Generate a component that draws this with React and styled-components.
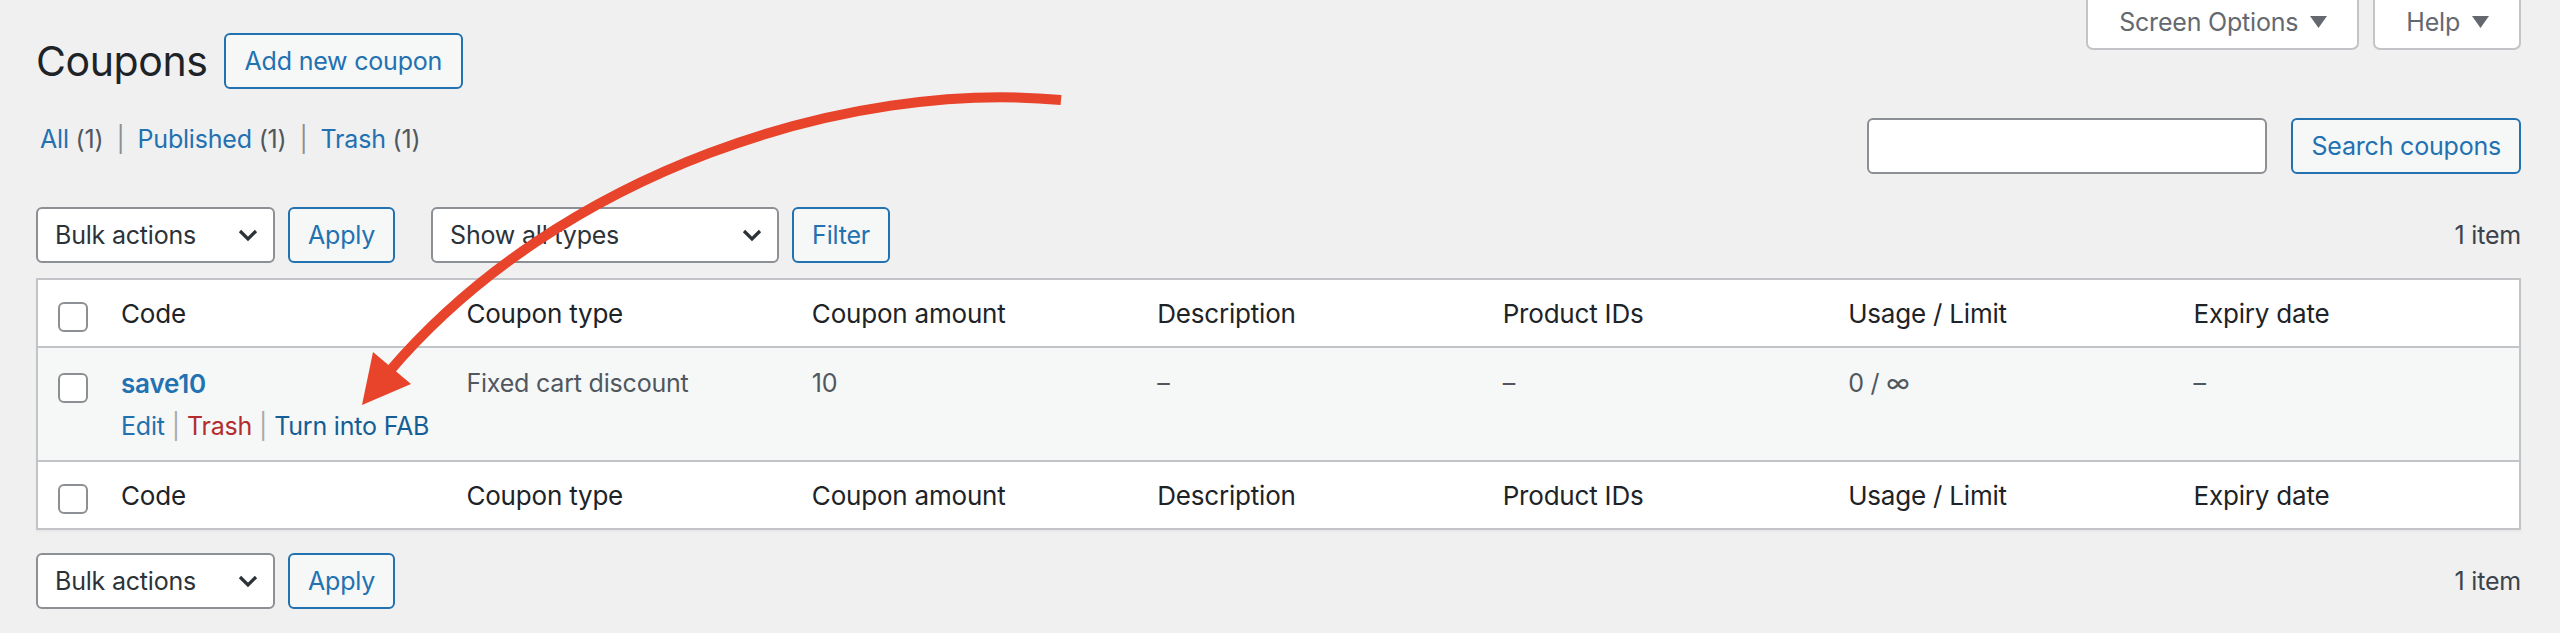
import React from "react";
import styled, { createGlobalStyle } from "styled-components";

const GlobalStyle = createGlobalStyle`
  html, body {
    margin: 0;
    padding: 0;
  }
  body {
    background: #f0f0f1;
    font-family: Inter, "Noto Sans", "Liberation Sans", sans-serif;
    color: #3c434a;
    letter-spacing: -0.2px;
  }
`;

const columns = [
  "Code",
  "Coupon type",
  "Coupon amount",
  "Description",
  "Product IDs",
  "Usage / Limit",
  "Expiry date",
];

const coupon = {
  code: "save10",
  type: "Fixed cart discount",
  amount: "10",
  description: "–",
  products: "–",
  usage: "0 / ∞",
  expiry: "–",
};

const Caret = () => (
  <svg width="17" height="12" viewBox="0 0 17 12">
    <path d="M0 0h17L8.5 12z" fill="#646970" />
  </svg>
);

const Chevron = () => (
  <svg width="20" height="13" viewBox="0 0 20 13">
    <path d="M2 2l8 8 8-8" stroke="#2c3338" strokeWidth="3.2" fill="none" />
  </svg>
);

const Select = ({ label, width, ml }) => (
  <SelectBox $width={width} $ml={ml}>
    <span>{label}</span>
    <Chevron />
  </SelectBox>
);

const TableNavBar = ({ top }) => (
  <TableNav $top={top}>
    <Select label="Bulk actions" width={239} />
    <Button $ml={13}>Apply</Button>
    {top && (
      <>
        <Select label="Show all types" width={348} ml={36} />
        <Button $ml={13}>Filter</Button>
      </>
    )}
    <Count>1 item</Count>
  </TableNav>
);

const HeadRow = ({ foot }) => (
  <HeaderRow $foot={foot}>
    <CheckCell $head>
      <Checkbox />
    </CheckCell>
    {columns.map((c) => (
      <HeadCell key={c}>{c}</HeadCell>
    ))}
  </HeaderRow>
);

const App = () => {
  return (
    <Page>
      <GlobalStyle />
      <TopBar>
        <TitleGroup>
          <Title>Coupons</Title>
          <Button $action>Add new coupon</Button>
        </TitleGroup>
        <MetaLinks>
          <MetaTab>
            Screen Options <Caret />
          </MetaTab>
          <MetaTab>
            Help <Caret />
          </MetaTab>
        </MetaLinks>
      </TopBar>

      <FilterRow>
        <SubSub>
          <Link>All</Link> <Muted>(1)</Muted>
          <Sep>|</Sep>
          <Link>Published</Link> <Muted>(1)</Muted>
          <Sep>|</Sep>
          <Link>Trash</Link> <Muted>(1)</Muted>
        </SubSub>
        <SearchBox>
          <SearchInput type="search" />
          <Button>Search coupons</Button>
        </SearchBox>
      </FilterRow>

      <TableNavBar top />

      <Table>
        <HeadRow />
        <DataRow>
          <CheckCell>
            <Checkbox />
          </CheckCell>
          <Cell>
            <RowTitle>{coupon.code}</RowTitle>
            <RowActions>
              <ActionLink>Edit</ActionLink>
              <ActionSep>|</ActionSep>
              <ActionLink $danger>Trash</ActionLink>
              <ActionSep>|</ActionSep>
              <ActionLink $focus>Turn into FAB</ActionLink>
            </RowActions>
          </Cell>
          <Cell>{coupon.type}</Cell>
          <Cell>{coupon.amount}</Cell>
          <Cell>{coupon.description}</Cell>
          <Cell>{coupon.products}</Cell>
          <Cell>{coupon.usage}</Cell>
          <Cell>{coupon.expiry}</Cell>
        </DataRow>
        <HeadRow foot />
      </Table>

      <TableNavBar />

      <Overlay width="2560" height="633" viewBox="0 0 2560 633">
        <path
          d="M1061 100 C 850 80, 560 170, 388 373"
          stroke="#e8432b"
          strokeWidth="10"
          fill="none"
        />
        <polygon points="362,405 411,384 373,352" fill="#e8432b" />
      </Overlay>
    </Page>
  );
};

export default App;

const Page = styled.div`
  position: relative;
  box-sizing: border-box;
  height: 633px;
  padding: 0 39px 0 36px;
  overflow: hidden;
`;

const TopBar = styled.div`
  display: flex;
  justify-content: space-between;
  align-items: flex-start;
`;

const TitleGroup = styled.div`
  display: flex;
  align-items: center;
  gap: 16px;
  margin-top: 33px;
`;

const Title = styled.h1`
  margin: 0;
  font-size: 41px;
  font-weight: 400;
  line-height: 56px;
  color: #1d2327;
  letter-spacing: -0.4px;
`;

const Button = styled.div`
  box-sizing: border-box;
  display: inline-flex;
  align-items: center;
  height: 56px;
  padding: 0 ${(p) => (p.$action ? "19px" : "18px")};
  margin-left: ${(p) => (p.$ml ? `${p.$ml}px` : "0")};
  border: 2px solid #2271b1;
  border-radius: 6px;
  background: #f6f7f7;
  color: #2271b1;
  font-size: 25px;
  white-space: nowrap;
`;

const MetaLinks = styled.div`
  display: flex;
  gap: 14px;
`;

const MetaTab = styled.div`
  box-sizing: border-box;
  display: flex;
  align-items: center;
  gap: 12px;
  height: 50px;
  padding: 0 30px 5px 31px;
  background: #fff;
  border: 2px solid #c3c4c7;
  border-top: none;
  border-radius: 0 0 7px 7px;
  color: #646970;
  font-size: 25px;
`;

const FilterRow = styled.div`
  display: flex;
  justify-content: space-between;
  align-items: flex-start;
  margin-top: 29px;
`;

const SubSub = styled.div`
  margin-top: 3px;
  padding-left: 4px;
  font-size: 25px;
  line-height: 36px;
`;

const Link = styled.span`
  color: #2271b1;
`;

const Muted = styled.span`
  color: #50575e;
`;

const Sep = styled.span`
  color: #8c8f94;
  margin: 0 13px;
`;

const SearchBox = styled.div`
  display: flex;
  gap: 24px;
`;

const SearchInput = styled.input`
  box-sizing: border-box;
  width: 400px;
  height: 56px;
  border: 2px solid #8c8f94;
  border-radius: 6px;
  background: #fff;
  outline: none;
`;

const TableNav = styled.div`
  display: flex;
  align-items: center;
  height: 56px;
  margin-top: ${(p) => (p.$top ? "33px" : "23px")};
`;

const SelectBox = styled.div`
  box-sizing: border-box;
  display: flex;
  align-items: center;
  justify-content: space-between;
  width: ${(p) => p.$width}px;
  height: 56px;
  padding: 0 15px 0 17px;
  margin-left: ${(p) => (p.$ml ? `${p.$ml}px` : "0")};
  border: 2px solid #8c8f94;
  border-radius: 6px;
  background: #fff;
  color: #2c3338;
  font-size: 25px;
`;

const Count = styled.div`
  margin-left: auto;
  font-size: 25px;
  color: #3c434a;
`;

const Table = styled.div`
  margin-top: 15px;
  border: 2px solid #c3c4c7;
  background: #fff;
  box-shadow: 0 2px 2px rgba(0, 0, 0, 0.04);
`;

const gridCols = `
  display: grid;
  grid-template-columns: 63px repeat(7, minmax(0, 1fr));
`;

const HeaderRow = styled.div`
  ${gridCols}
  align-items: center;
  height: 66px;
  border-bottom: ${(p) => (p.$foot ? "none" : "2px solid #c3c4c7")};
  border-top: ${(p) => (p.$foot ? "2px solid #c3c4c7" : "none")};
`;

const HeadCell = styled.div`
  padding: 0 20px;
  font-size: 26px;
  color: #1d2327;
  white-space: nowrap;
`;

const DataRow = styled.div`
  ${gridCols}
  align-items: start;
  background: #f6f7f7;
  height: 112px;
  box-sizing: border-box;
  padding: 16px 0;
`;

const CheckCell = styled.div`
  padding-left: 20px;
  padding-top: ${(p) => (p.$head ? "8px" : "9px")};
  align-self: ${(p) => (p.$head ? "center" : "start")};
`;

const Checkbox = styled.div`
  box-sizing: border-box;
  width: 30px;
  height: 30px;
  border: 2px solid #8c8f94;
  border-radius: 6px;
  background: #fff;
`;

const Cell = styled.div`
  padding: 0 20px;
  font-size: 25px;
  line-height: 39px;
  color: #50575e;
  white-space: nowrap;
`;

const RowTitle = styled.div`
  font-size: 26px;
  font-weight: 600;
  color: #2271b1;
`;

const RowActions = styled.div`
  margin-top: 4px;
  font-size: 25px;
`;

const ActionLink = styled.span`
  color: ${(p) => (p.$danger ? "#b32d2e" : p.$focus ? "#135e96" : "#2271b1")};
`;

const ActionSep = styled.span`
  color: #a7aaad;
  margin: 0 7px;
`;

const Overlay = styled.svg`
  position: absolute;
  left: 0;
  top: 0;
  pointer-events: none;
`;
